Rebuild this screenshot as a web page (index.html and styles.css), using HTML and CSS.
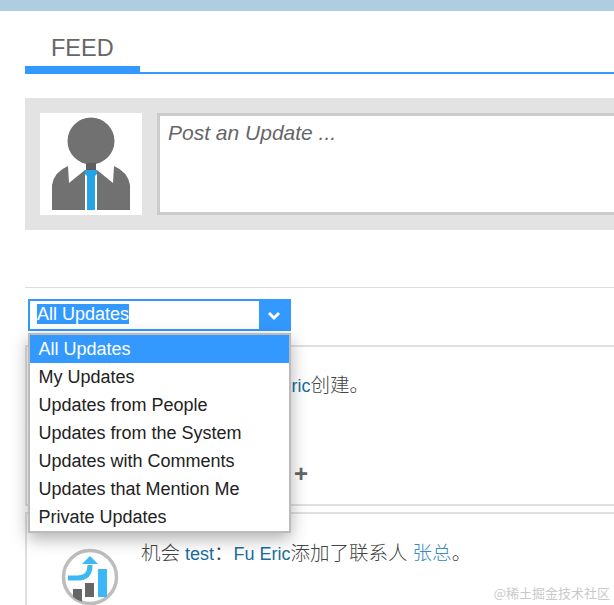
FILE: index.html
```html
<!DOCTYPE html>
<html lang="en">
<head>
  <meta charset="UTF-8" />
  <meta name="viewport" content="width=device-width, initial-scale=1.0"/>
  <title>Feed</title>
  <link rel="stylesheet" href="styles.css">
</head>
<body>

<div class="top-bar"></div>

<div class="page">
  <div class="tabs">
    <div class="tab">FEED</div>
  </div>

  <div class="composer">
    <div class="avatar">
      <svg width="102" height="102" viewBox="0 0 102 102">
        <circle cx="51" cy="28" r="23.5" fill="#717171"/>
        <rect x="46" y="50" width="10" height="8" fill="#5f5f5f"/>
        <path d="M12 97V72Q14 59 28 53L29 70L45 57V97Z" fill="#717171"/>
        <path d="M90 97V72Q88 59 74 53L73 70L57 57V97Z" fill="#717171"/>
        <path d="M45 57H57V61L55 63V97H47V63L45 61Z" fill="#22a5e8"/>
      </svg>
    </div>
    <div class="post-box">Post an Update ...</div>
  </div>

  <div class="filter">
    <div class="filter-select">
      <div class="filter-value"><span class="filter-text">All Updates</span></div>
      <div class="filter-arrow">
        <svg width="14" height="10" viewBox="0 0 14 10">
          <path d="M2 2L7 7L12 2" fill="none" stroke="#fff" stroke-width="3"/>
        </svg>
      </div>
    </div>
    <ul class="filter-menu">
      <li class="active">All Updates</li>
      <li>My Updates</li>
      <li>Updates from People</li>
      <li>Updates from the System</li>
      <li>Updates with Comments</li>
      <li>Updates that Mention Me</li>
      <li>Private Updates</li>
    </ul>
  </div>

  <div class="card card-first">
    <p class="card-text"><span class="zh">机会</span> test <span class="zh">由</span> <a class="link link-creator">Fu Eric</a><span class="zh">创建。</span></p>
    <div class="card-actions">+</div>
  </div>

  <div class="card card-second">
    <svg class="card-icon" width="60" height="60" viewBox="0 0 60 60">
      <defs>
        <clipPath id="iconClip"><circle cx="30" cy="30" r="26"/></clipPath>
      </defs>
      <circle cx="30" cy="30" r="26.500" fill="#fff" stroke="#bdbdbd" stroke-width="3.500"/>
      <g clip-path="url(#iconClip)">
        <rect x="13" y="42" width="9" height="16" fill="#666"/>
        <rect x="25" y="36" width="9" height="14" fill="#666"/>
        <rect x="38" y="22" width="9" height="28" fill="#3bb8f5"/>
        <path d="M8 31H18Q30 31 30 18" fill="none" stroke="#3bb8f5" stroke-width="5"/>
        <path d="M30 9L38 17H22Z" fill="#3bb8f5"/>
      </g>
    </svg>
    <p class="card-text"><span class="zh">机会</span> <a class="link">test</a><span class="zh">：</span><a class="link">Fu Eric</a><span class="zh">添加了联系人</span> <a class="link link-light zh">张总</a><span class="zh">。</span></p>
  </div>
</div>

<div class="watermark">@稀土掘金技术社区</div>

</body>
</html>
```

FILE: styles.css
```css
* { box-sizing: border-box; }
html, body {
  height: 605px;
  overflow: hidden;
}
body {
  font-family: 'Liberation Sans', 'Noto Sans CJK SC', sans-serif;
  background: #fff;
  margin: 0;
  color: #333;
}
.top-bar {
  height: 11px;
  background: #b0cce1;
}
.page {
  position: relative;
  margin-left: 25px;
}
.tabs {
  height: 63px;
  border-bottom: 2px solid #3399ff;
}
.tab {
  width: 115px;
  height: 63px;
  padding: 24px 0 0 26px;
  font-size: 23.500px;
  line-height: 27px;
  color: #666;
  border-bottom: 8px solid #3399ff;
}
.composer {
  display: flex;
  gap: 15px;
  height: 132px;
  margin-top: 24px;
  padding: 15px 0 15px 15px;
  background: #e3e3e3;
}
.avatar {
  width: 102px;
  height: 102px;
  background: #fff;
}
.avatar svg { display: block; }
.post-box {
  flex: 1;
  padding: 3px 8px;
  background: #fff;
  border: 3px solid #ccc;
  border-right: none;
  font-size: 21px;
  line-height: 28px;
  font-style: italic;
  color: #666;
}
.filter {
  position: relative;
  margin-top: 57px;
  padding: 11px 0 14px 3px;
  border-top: 1px solid #ddd;
}
.filter-select {
  display: flex;
  width: 263px;
  height: 32px;
  border: 2px solid #3399ff;
}
.filter-value {
  flex: 1;
  padding-left: 7px;
  background: #fff;
  font-size: 18px;
  line-height: 26px;
}
.filter-text {
  background: #3399ff;
  color: #fff;
}
.filter-arrow {
  display: flex;
  align-items: center;
  justify-content: center;
  width: 30px;
  padding-top: 2px;
  background: #3399ff;
}
.filter-menu {
  position: absolute;
  top: 45px;
  left: 3px;
  z-index: 2;
  width: 263px;
  margin: 0;
  padding: 0;
  list-style: none;
  background: #fff;
  border: 2px solid #bbb;
  box-shadow: 0 6px 16px rgba(0, 0, 0, 0.3);
  font-size: 18px;
  line-height: 28px;
  color: #222;
}
.filter-menu li { padding-left: 8.500px; }
.filter-menu .active {
  background: #3399ff;
  color: #fff;
}
.card {
  border-top: 2px solid #e0e0e0;
  border-left: 2px solid #e0e0e0;
}
.card-first {
  height: 161px;
  border-bottom: 2px solid #e0e0e0;
  padding: 26px 0 0 114px;
}
.card-second {
  display: flex;
  margin-top: 6px;
  height: 100px;
  padding: 27px 0 0 33px;
}
.card-text {
  margin: 0;
  font-size: 18px;
  line-height: 24px;
  color: #444;
}
.zh {
  font-size: 19.500px;
  font-weight: 300;
}
.card-icon {
  flex: none;
  margin: 6px 21px 0 0;
}
.card-actions {
  margin: 64px 0 0 153px;
  font-size: 24px;
  line-height: 24px;
  font-weight: bold;
  color: #666;
}
.link { color: #1a6d9e; }
.link-creator { margin-left: 10px; }
.link-light { color: #3a8ab8; }
.watermark {
  position: absolute;
  top: 584px;
  right: 4px;
  font-family: 'Noto Sans CJK SC', sans-serif;
  font-size: 13px;
  line-height: 18px;
  color: #cacaca;
}
```
